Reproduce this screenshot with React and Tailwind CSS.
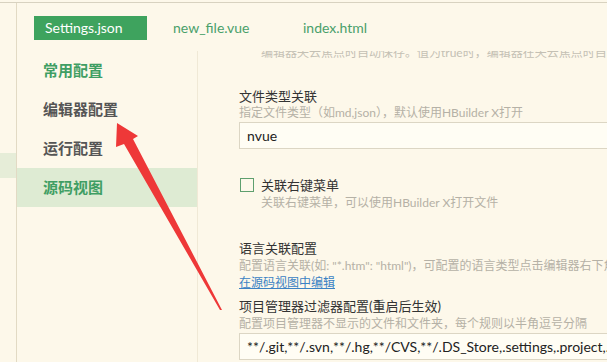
const font = { fontFamily: 'Lato, "Noto Sans CJK SC", sans-serif' };

const Tabs = () => (
  <div className="h-[48px] pl-[17px] pt-[13px] flex items-start">
    <div className="w-[113px] h-[24px] bg-[#3ea35e] text-white text-[14px] leading-[24px] pl-[11px]">
      Settings.json
    </div>
    <div className="w-[130px] ml-[26px] text-[#4aa06a] text-[14px] leading-[24px]">new_file.vue</div>
    <div className="text-[#4aa06a] text-[14px] leading-[24px]">index.html</div>
  </div>
);

const menu = [
  { label: "常用配置", color: "text-[#3f9e63]" },
  { label: "编辑器配置", color: "text-[#555555]" },
  { label: "运行配置", color: "text-[#555555]" },
  { label: "源码视图", color: "text-[#3f9e63]", active: true },
];

const Sidebar = () => (
  <div className="w-[181px] shrink-0 border-r border-[#f0e9d6]">
    {menu.map((m) => (
      <div
        key={m.label}
        className={`h-[39px] pl-[26px] flex items-center text-[15px] font-bold ${m.color} ${
          m.active ? "bg-[#deebd3]" : ""
        }`}
      >
        {m.label}
      </div>
    ))}
  </div>
);

const Label = ({ children, className = "" }) => (
  <div className={`text-[13px] leading-[18px] text-[#333333] whitespace-nowrap ${className}`}>{children}</div>
);

const Desc = ({ children, className = "" }) => (
  <div className={`text-[12px] leading-[16px] text-[#b5b1a6] whitespace-nowrap ${className}`}>{children}</div>
);

const Input = ({ value, className = "" }) => (
  <div
    className={`w-[420px] h-[27px] border border-[#dcd6c4] bg-[#fffdf4] pl-[7px] text-[14px] leading-[25px] text-[#222222] whitespace-nowrap overflow-hidden ${className}`}
  >
    {value}
  </div>
);

const Content = () => (
  <div className="flex-1 pl-[41px] overflow-hidden">
    <Desc className="-mt-[6px] pl-[22px] text-[#c4c0b4]">
      编辑器失去焦点时自动保存。值为true时，编辑器在失去焦点时自动保存。
    </Desc>
    <Label className="mt-[26px]">文件类型关联</Label>
    <Desc>指定文件类型（如md,json），默认使用HBuilder X打开</Desc>
    <Input value="nvue" className="mt-[1px]" />
    <div className="mt-[27px] flex items-center h-[18px]">
      <div className="w-[14px] h-[14px] border border-[#5e9f6e] ml-[1px] mr-[7px]" />
      <Label>关联右键菜单</Label>
    </div>
    <Desc className="mt-[1px] pl-[22px]">关联右键菜单，可以使用HBuilder X打开文件</Desc>
    <Label className="mt-[28px]">语言关联配置</Label>
    <Desc className="mt-[1px]">
      配置语言关联(如: "*.htm": "html")，可配置的语言类型点击编辑器右下角语言类型查看
    </Desc>
    <div className="mt-[1px] text-[12px] leading-[16px] text-[#3b82c4] underline">在源码视图中编辑</div>
    <Label className="mt-[6px]">项目管理器过滤器配置(重启后生效)</Label>
    <Desc className="mt-[1px]">配置项目管理器不显示的文件和文件夹，每个规则以半角逗号分隔</Desc>
    <Input
      value="**/.git,**/.svn,**/.hg,**/CVS,**/.DS_Store,.settings,.project,.hbuilderx"
      className="mt-[1px]"
    />
  </div>
);

const Arrow = () => (
  <svg className="absolute left-0 top-0 pointer-events-none" width="607" height="362" viewBox="0 0 607 362">
    <polygon
      points="117,123 138,136 133,139 222,310 220,310 124,144 116,147"
      fill="#ee3838"
    />
  </svg>
);

export default function App() {
  return (
    <div className="relative w-[607px] h-[362px] bg-[#fdf8ea] overflow-hidden" style={font}>
      <div className="h-[2px]" />
      <div className="flex h-[360px] border-t border-[#d8d2c0]">
        <div className="w-[17px] shrink-0 border-r border-[#e2dac4] pt-[150px]">
          <div className="h-[25px] bg-[#e6edd8]" />
        </div>
        <div className="flex-1 flex flex-col">
          <Tabs />
          <div className="flex flex-1">
            <Sidebar />
            <Content />
          </div>
        </div>
      </div>
      <Arrow />
    </div>
  );
}
